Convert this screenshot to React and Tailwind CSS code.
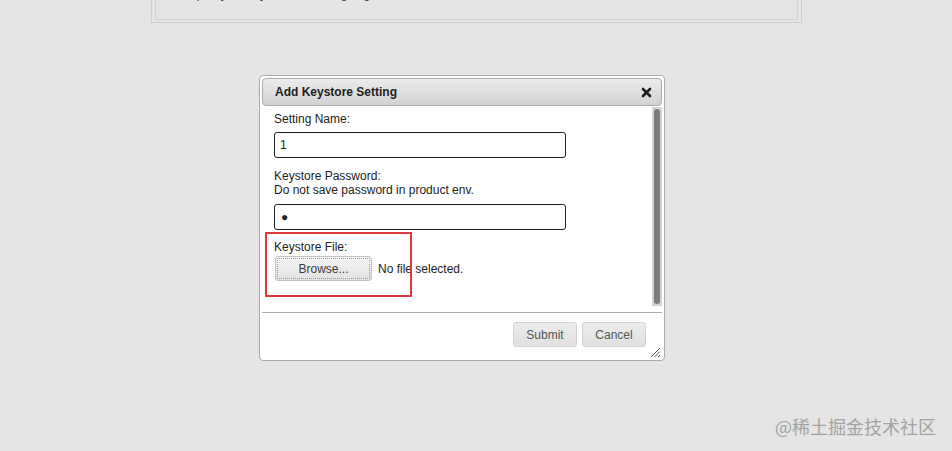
import React from 'react';

// ═══════════════════════════════════════════════════════════════
// ADD KEYSTORE SETTING  —  dialog over a greyed page
// ═══════════════════════════════════════════════════════════════

var Label = ({ children, className = '' }) => (
    <div className={`text-[12px] leading-[14px] text-[#222] ${className}`}>{children}</div>
);

var Field = ({ children, className = '' }) => (
    <div className={`w-[292px] h-[26px] border border-[#1f1f1f] rounded-[3px] bg-white px-[5px] flex items-center text-[12px] text-[#222] ${className}`}>
        {children}
    </div>
);

var FooterButton = ({ children }) => (
    <button className="w-[64px] h-[25px] rounded-[3px] border border-[#d3d3d3] bg-gradient-to-b from-[#ececec] to-[#e0e0e0] text-[12px] text-[#555] flex items-center justify-center">
        {children}
    </button>
);

var CloseIcon = () => (
    <svg width="11" height="11" viewBox="0 0 11 11">
        <path d="M2 2L9 9M9 2L2 9" stroke="#1d1d1d" strokeWidth="2.6" strokeLinecap="round" />
    </svg>
);

var ResizeGrip = () => (
    <svg width="11" height="11" viewBox="0 0 11 11" className="absolute right-[3px] bottom-[2px]">
        <path d="M10 1L1 10M10 4.5L4.5 10M10 8L8 10" stroke="#555" strokeWidth="1" />
    </svg>
);

export default function App() {
    return (
        <div className="relative w-[952px] h-[451px] overflow-hidden bg-[#e5e5e5] font-['Liberation_Sans',Arial,sans-serif]">
            {/* Panel achter de dialoog (bovenkant buiten beeld) */}
            <div className="ml-[151px] w-[651px] h-[23px] border border-t-0 border-[#cfcfcf] px-[3px] pb-[2px]">
                <div className="h-full border border-t-0 border-[#d2d2d2] overflow-hidden">
                    <div className="-mt-[13px] pl-[14px] text-[12px] leading-[14px] text-[#333] whitespace-nowrap">
                        3. Import your keystore file for signing
                    </div>
                </div>
            </div>

            {/* Dialog */}
            <div className="relative mt-[52px] ml-[259px] w-[406px] h-[286px] border border-[#aaaaaa] rounded-[4px] bg-white p-[2px] flex flex-col">
                {/* Header */}
                <div className="h-[28px] shrink-0 border border-[#aaaaaa] rounded-[4px] bg-gradient-to-b from-[#ececec] to-[#d2d2d2] pl-[12px] pr-[9px] flex items-center justify-between">
                    <span className="text-[12px] font-bold text-[#222]">Add Keystore Setting</span>
                    <CloseIcon />
                </div>

                {/* Body */}
                <div className="h-[206px] shrink-0 flex">
                    <div className="flex-1 pt-[6px] pl-[12px]">
                        <Label>Setting Name:</Label>
                        <Field className="mt-[6px]">1</Field>

                        <Label className="mt-[11px]">Keystore Password:</Label>
                        <Label>Do not save password in product env.</Label>
                        <Field className="mt-[7px]">
                            <span className="text-[12px] leading-none pl-[1px]">●</span>
                        </Field>

                        <Label className="mt-[10px]">Keystore File:</Label>
                        <div className="mt-[2px] flex items-center">
                            <button className="ml-[1px] w-[97px] h-[25px] rounded-[3px] border border-[#c4c4c4] bg-gradient-to-b from-[#f5f5f5] to-[#e2e2e2] outline outline-1 outline-dotted outline-[#9a9a9a] -outline-offset-[3px] text-[12px] text-[#3a3a3a] flex items-center justify-center">
                                Browse...
                            </button>
                            <span className="ml-[6px] text-[12px] text-[#222]">No file selected.</span>
                        </div>
                    </div>

                    {/* Scrollbar */}
                    <div className="w-[10px] mt-[1px] mb-[6px] bg-[#d4d4d4] flex justify-center py-[2px]">
                        <div className="w-[6px] h-full rounded-full bg-[#7b7b7b]" />
                    </div>
                </div>

                {/* Footer */}
                <div className="flex-1 border-t border-[#acacac] pt-[9px] pr-[16px] flex justify-end items-start gap-[5px]">
                    <FooterButton>Submit</FooterButton>
                    <FooterButton>Cancel</FooterButton>
                </div>

                <ResizeGrip />
            </div>

            {/* Annotatie */}
            <div className="absolute left-[265px] top-[232px] w-[147px] h-[65px] border-2 border-[#e2393f]" />

            {/* Watermerk */}
            <div className="absolute right-[16px] top-[415px] text-[18px] leading-[22px] text-[#a3a3a3] font-['Noto_Sans_CJK_SC',sans-serif]">
                @稀土掘金技术社区
            </div>
        </div>
    );
}
